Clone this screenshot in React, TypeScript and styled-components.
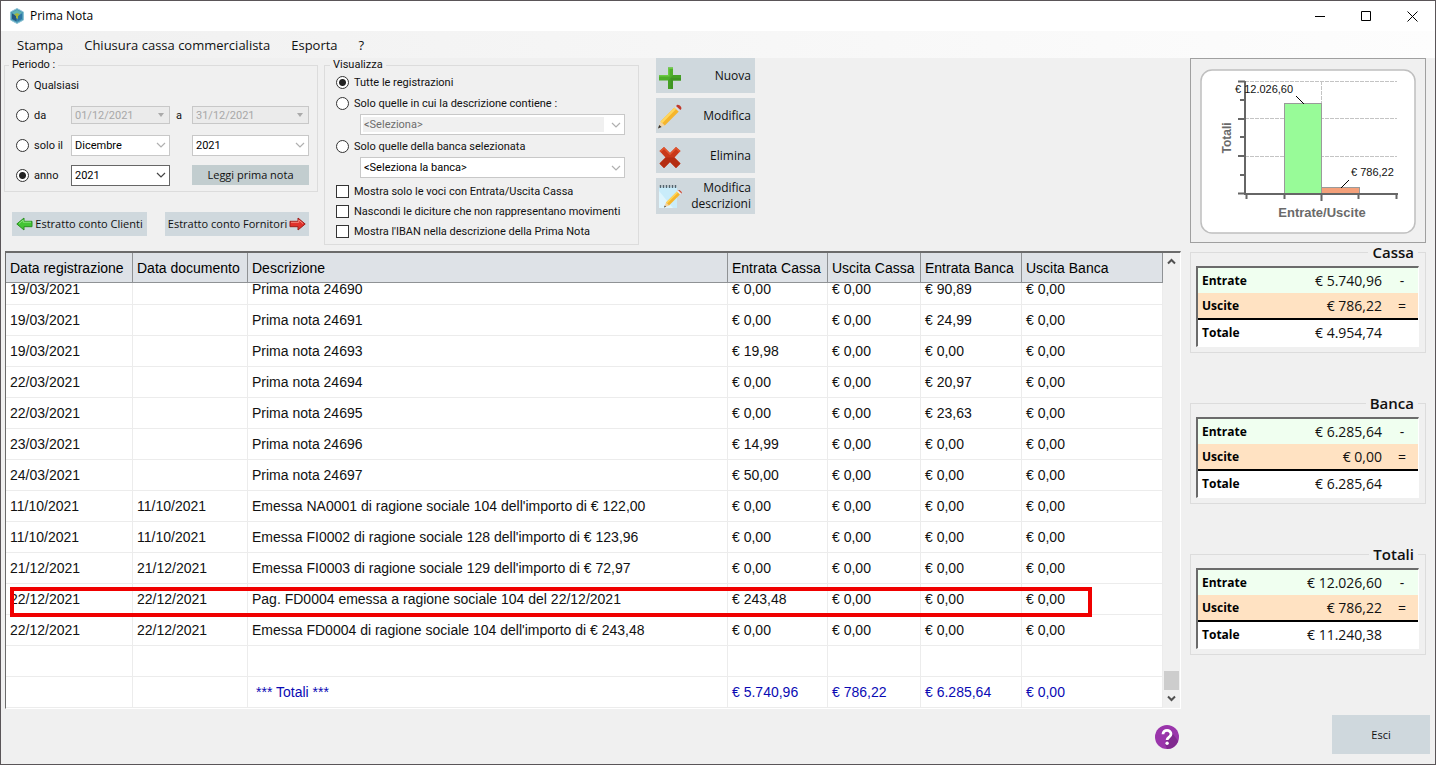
import React, { useLayoutEffect, useRef } from "react";
import styled, { createGlobalStyle, css } from "styled-components";

const GlobalStyle = createGlobalStyle`
  *, *::before, *::after { box-sizing: border-box; }
  html, body { margin: 0; padding: 0; }
  body, button, input, select, legend, table {
    font-family: "Open Sans", "Noto Sans", sans-serif;
    font-size: 11px;
    color: #111;
  }
`;

const labelFont = css`
  font-family: Roboto, Tahoma, sans-serif;
  font-size: 11px;
`;

/* ---------- window frame ---------- */

const Window = styled.div`
  display: flex;
  flex-direction: column;
  height: 100vh;
  background: #f0f0f0;
  border: 1px solid #5a5558;
`;

const TitleBar = styled.header`
  display: flex;
  align-items: center;
  flex: none;
  height: 30px;
  padding-left: 8px;
  background: #fff;
`;

const Title = styled.h1`
  flex: 1;
  margin: 0 0 0 5px;
  font-size: 12px;
  font-weight: 400;
  line-height: 16px;
  color: #000;
`;

const CaptionButton = styled.button`
  display: flex;
  align-items: center;
  justify-content: center;
  width: 46px;
  height: 30px;
  padding: 0;
  border: 0;
  background: none;
`;

const MenuBar = styled.nav`
  display: flex;
  align-items: center;
  flex: none;
  gap: 21px;
  height: 27px;
  padding-left: 16px;
  background: linear-gradient(90deg, #f0f0f0, #fdfdfd);
`;

const MenuItem = styled.button`
  padding: 0;
  border: 0;
  background: none;
  font-size: 13px;
  line-height: 20px;
  color: #111;
`;

const Body = styled.main`
  display: flex;
  flex: 1;
  min-height: 0;
  gap: 9px;
  padding: 0 9px 0 4px;
`;

const MainColumn = styled.div`
  display: flex;
  flex-direction: column;
  flex: 1;
  min-width: 0;
  gap: 6px;
`;

const SideColumn = styled.aside`
  flex: none;
  width: 236px;
`;

const Footer = styled.footer`
  display: flex;
  align-items: center;
  justify-content: flex-end;
  flex: none;
  gap: 153px;
  height: 55px;
  padding: 0 5px 4px 0;
`;

/* ---------- filters ---------- */

const Filters = styled.div`
  display: flex;
  align-items: flex-start;
`;

const Group = styled.fieldset`
  display: flex;
  flex-direction: column;
  margin: 0;
  min-width: 0;
  border: 1px solid #dcdcdc;
`;

const GroupLegend = styled.legend`
  padding: 0 3px;
  ${labelFont}
  line-height: 14px;
`;

const PeriodColumn = styled.div`
  display: flex;
  flex-direction: column;
  gap: 20px;
  width: 314px;
  margin: 0 6px 0 -1px;
`;

const PeriodGroup = styled(Group)`
  gap: 8px;
  padding: 2px 8px 5px 11px;

  & > legend {
    margin-left: -7px;
  }
`;

const PeriodRow = styled.div`
  display: grid;
  grid-template-columns: 55px 99px 22px 1fr;
  align-items: center;
  height: 22px;
`;

const ViewGroup = styled(Group)`
  gap: 1px;
  width: 315px;
  padding: 0 13px 3px 11px;

  & > legend {
    margin-left: -6px;
  }
`;

const Option = styled.label`
  display: flex;
  align-items: center;
  gap: 5px;
  height: 20px;
  ${labelFont}
  white-space: nowrap;
`;

const CheckList = styled.div`
  display: flex;
  flex-direction: column;
  padding-top: 2px;
`;

const Radio = styled.input.attrs({ type: "radio" })`
  appearance: none;
  flex: none;
  width: 13px;
  height: 13px;
  margin: 0;
  border: 1px solid #333;
  border-radius: 50%;
  background: #fff;

  &:checked {
    background: radial-gradient(circle, #222 0 3px, #fff 4px);
  }
`;

const Check = styled.input.attrs({ type: "checkbox" })`
  appearance: none;
  flex: none;
  width: 13px;
  height: 13px;
  margin: 0;
  border: 1px solid #333;
  background: #fff;
`;

const Between = styled.span`
  ${labelFont}
  text-align: center;
  padding-right: 4px;
`;

type Tone = "date" | "faded" | "active" | "blocked";

const tones = {
  date: css`
    height: 18px;
    border-color: #c8c8c8;
    background: #ebebeb;
    color: #a8a8a8;
  `,
  faded: css`
    border-color: #c8c8c8;
  `,
  active: css`
    border-color: #666;
  `,
  blocked: css`
    border-color: #c8c8c8;
    background: #f0f0f0;
    box-shadow: inset 0 0 0 2px #fff, inset -20px 0 0 #fff;
    color: #6d6d6d;
  `,
};

const SelectFrame = styled.span<{ $inset?: boolean }>`
  display: grid;
  align-items: center;
  margin-left: ${(p) => (p.$inset ? "24px" : "0")};

  & > * {
    grid-area: 1 / 1;
  }

  & > svg {
    justify-self: end;
    margin-right: 4px;
    pointer-events: none;
  }
`;

const SelectBox = styled.select<{ $tone: Tone }>`
  appearance: none;
  width: 100%;
  height: 21px;
  margin: 0;
  padding: 0 18px 0 3px;
  border: 1px solid;
  border-radius: 0;
  background: #fff;
  ${labelFont}
  color: #000;
  opacity: 1;
  ${(p) => tones[p.$tone]}
`;

const FlatButton = styled.button<{ $dark?: boolean }>`
  display: flex;
  align-items: center;
  justify-content: center;
  padding: 0;
  border: 0;
  background: ${(p) => (p.$dark ? "#c2cdcf" : "#cfd8dd")};
  line-height: 16px;
  white-space: nowrap;

  & > svg {
    flex: none;
  }
`;

const ReadButton = styled(FlatButton)`
  height: 20px;
`;

const StatementRow = styled.div`
  display: flex;
  justify-content: space-between;
  padding: 0 9px 0 8px;
`;

const StatementButton = styled(FlatButton)<{ $width: number }>`
  gap: 2px;
  width: ${(p) => p.$width}px;
  height: 24px;
`;

const ActionList = styled.div`
  display: flex;
  flex-direction: column;
  gap: 5px;
  width: 99px;
  margin-left: 17px;
`;

const ActionButton = styled(FlatButton)`
  justify-content: space-between;
  height: 36px;
  padding: 0 4px 0 1px;
  font-size: 12px;
  text-align: right;
  white-space: normal;

  &:not(:last-child) {
    height: 35px;
  }
`;

const ExitButton = styled(FlatButton)`
  width: 98px;
  height: 39px;
`;

const HelpButton = styled.button`
  display: flex;
  margin-top: 4px;
  padding: 0;
  border: 0;
  background: none;
`;

/* ---------- register ---------- */

const Register = styled.section`
  display: flex;
  flex: 1;
  min-height: 0;
  border-style: solid;
  border-width: 2px 1px 1px 1px;
  border-color: #6b6b6b #fff #fff #6b6b6b;
  background: #fff;
`;

const Scroller = styled.div`
  flex: 1;
  min-width: 0;
  overflow-y: auto;
  scrollbar-width: none;
`;

const RegisterTable = styled.table`
  width: 100%;
  table-layout: fixed;
  border-collapse: separate;
  border-spacing: 0;

  th,
  td {
    overflow: hidden;
    padding: 0 0 0 4px;
    font-family: "Liberation Sans", Arial, sans-serif;
    font-size: 14px;
    font-weight: 400;
    text-align: left;
    white-space: nowrap;
  }

  th {
    position: sticky;
    top: 0;
    z-index: 2;
    height: 30px;
    border-right: 1px solid #8f9295;
    border-bottom: 1px solid #8f9295;
    background: #dee2e7;
    color: #000;
  }

  td {
    height: 31px;
    border-right: 1px solid #ececec;
    border-bottom: 1px solid #ececec;
  }
`;

const Col = styled.col<{ $width?: number }>`
  width: ${(p) => (p.$width ? `${p.$width}px` : "auto")};
`;

const EntryRow = styled.tr<{ $total?: boolean }>`
  position: relative;
  color: ${(p) => (p.$total ? "#0a0ab4" : "#111")};

  ${(p) =>
    p.$total &&
    css`
      & > td:nth-child(3) {
        padding-left: 8px;
      }
    `}
`;

const Marker = styled.span`
  position: absolute;
  z-index: 1;
  inset: 3px 71px -2px 4px;
  border: 4px solid #f00000;
  pointer-events: none;
`;

const ScrollTrack = styled.div`
  display: flex;
  flex-direction: column;
  align-items: center;
  justify-content: space-between;
  flex: none;
  width: 17px;
  padding: 5px 0 6px;
  background: #f0f0f0;
`;

const ScrollEnd = styled.div`
  display: flex;
  flex-direction: column;
  align-items: center;
  gap: 5px;
`;

const Thumb = styled.div`
  width: 15px;
  height: 19px;
  background: #cdcdcd;
`;

/* ---------- side panels ---------- */

const ChartPanel = styled.div`
  height: 185px;
  padding: 10px 9px;
  border: 1px solid #a0a0a0;

  & > svg {
    display: block;
    font-family: "Liberation Sans", Arial, sans-serif;
  }
`;

const Summaries = styled.div`
  display: flex;
  flex-direction: column;
  gap: 41px;
`;

const SummaryGroup = styled(Group)`
  padding: 5px 6px 5px 5px;
`;

const SummaryLegend = styled.legend`
  margin-left: auto;
  margin-right: 1px;
  padding: 0 4px;
  font-size: 15px;
  font-weight: 600;
  line-height: 18px;
`;

const SummaryTable = styled.table`
  width: 100%;
  height: 81px;
  border-style: solid;
  border-width: 2px 1px 1px 2px;
  border-color: #6b6b6b #fff #fff #6b6b6b;
  border-collapse: separate;
  border-spacing: 0;
  background: #fff;

  th,
  td {
    height: 25px;
    padding: 0;
    font-size: 14px;
    font-weight: 400;
    line-height: 20px;
    text-align: right;
  }

  th {
    width: 60px;
    padding-left: 4px;
    font-size: 12px;
    font-weight: 700;
    text-align: left;
    color: #000;
  }

  td:last-child {
    width: 36px;
    padding-left: 4px;
    text-align: center;
  }

  tr:nth-child(1) {
    background: #f0fff0;
  }

  tr:nth-child(2) {
    background: #ffe2c2;
  }

  tr:nth-child(3) > * {
    height: 28px;
    border-top: 2px solid #000;
  }
`;

/* ---------- icons ---------- */

const AppIcon = () => (
  <svg width="16" height="16" viewBox="0 0 16 16" aria-hidden="true">
    <path d="M8 .5 14.5 4v8L8 15.500 1.500 12V4z" fill="#4e9cb8" stroke="#8fc3d4" />
    <path d="M8 2 13 4.800 8 7.500 3 4.800z" fill="#63b5b0" />
    <path d="M3 5.500 7.600 8v5.600L3 11z" fill="#23577f" />
    <path d="M13 5.500 8.400 8v5.600L13 11z" fill="#2c76a5" />
    <path d="M5 6.500 8 5l3 1.500L9 8v3L7 10V8z" fill="#a6b63c" />
  </svg>
);

const Minimize = () => (
  <svg width="10" height="11" aria-hidden="true">
    <path d="M0 5.500h10" stroke="#000" />
  </svg>
);

const Maximize = () => (
  <svg width="11" height="11" aria-hidden="true">
    <path d="M.5 .5h9v9h-9z" fill="none" stroke="#000" />
  </svg>
);

const Close = () => (
  <svg width="11" height="11" aria-hidden="true">
    <path d="M.5 .5l10 10M10.500 .5l-10 10" stroke="#000" />
  </svg>
);

const Chevron = ({ color }: { color: string }) => (
  <svg width="10" height="8" aria-hidden="true">
    <path d="M1 2l4 4 4-4" fill="none" stroke={color} strokeWidth="1.200" />
  </svg>
);

const ScrollArrow = ({ up }: { up?: boolean }) => (
  <svg width="9" height="7" aria-hidden="true">
    <path d={up ? "M1 5.500l3.500-3.500L8 5.500" : "M1 1.500l3.500 3.500L8 1.500"} fill="none" stroke="#505050" strokeWidth="2" />
  </svg>
);

const Triangle = () => (
  <svg width="10" height="8" aria-hidden="true">
    <path d="M2 2h6L5 6z" fill="#aaa" />
  </svg>
);

const LeftArrow = () => (
  <svg width="17" height="14" viewBox="0 0 17 14" aria-hidden="true">
    <path d="M.8 7 8 1v3.300h8v5.400H8V13z" fill="#43c433" stroke="#2a8f20" strokeLinejoin="round" />
    <path d="M3 6.600 7.200 3v2.200H15" fill="none" stroke="#8be57d" />
  </svg>
);

const RightArrow = () => (
  <svg width="17" height="14" viewBox="0 0 17 14" aria-hidden="true">
    <path d="M16.200 7 9 1v3.300H1v5.400h8V13z" fill="#e0322c" stroke="#9c1f1b" strokeLinejoin="round" />
    <path d="M2 5.300h7.800V3L14 6.600" fill="none" stroke="#f48a80" />
  </svg>
);

const PlusIcon = () => (
  <svg width="26" height="26" viewBox="0 0 26 26" aria-hidden="true">
    <path d="M11 4.500h5V12h8v5.500h-8V26h-5v-8.500H2V12h9z" fill="#4fae2b" />
    <path d="M11 17.500 13.500 15l2.500 2.500V26h-5zM16 12h8v2.700H13.500z" fill="#46a026" />
    <path d="M13.500 14.700H24v2.800h-8V26h-2.500z" fill="#3f9422" />
    <path d="M11 4.500h5V6h-3.500v7.500H2V12h9z" fill="#6cc944" />
  </svg>
);

const PencilIcon = () => (
  <svg width="26" height="26" viewBox="0 0 26 26" aria-hidden="true">
    <path d="M1 25.500 3.500 18.500 7.800 22.500z" fill="#f3d3a2" />
    <path d="M1 25.500l1.200-3.600 2.400 2.200z" fill="#333" />
    <path d="M3.500 18.500 17.500 4.500 21.800 8.500 7.800 22.500z" fill="#f5b52c" />
    <path d="M3.500 18.500 17.500 4.500l1.700 1.600L5.200 20.200z" fill="#ffd65c" />
    <path d="M17.500 4.500 19 3l4.300 4-1.500 1.500z" fill="#d9dde0" />
    <path d="M19 3l.8-.8c1.800-1.700 6 2.300 4.300 4l-.8.800z" fill="#c1392b" />
  </svg>
);

const CrossIcon = () => (
  <svg width="26" height="26" viewBox="0 0 26 26" aria-hidden="true">
    <path d="M2.500 8 7 4l6 6 6-6 4.500 4-6 6.500 6 6L19 25l-6-6-6 6-4.500-4.500 6-6z" fill="#c9391a" />
    <path d="M8.500 14.500h9l6 6L19 25l-6-6-6 6-4.500-4.500z" fill="#b42d12" />
    <path d="M7 4 2.500 8l1.200 1.200L7 6.200l6 6 6-6 3.300 3L23.500 8 19 4l-6 6z" fill="#e0552f" />
  </svg>
);

const NotepadIcon = () => (
  <svg width="26" height="26" viewBox="0 0 26 26" aria-hidden="true">
    <path d="M2 4h18v21H2z" fill="#c9ecfa" />
    <path d="M2 25V8l14 17z" fill="#dff5fd" />
    <path d="M3.500 2v3M6.500 2v3M9.500 2v3M12.500 2v3M15.500 2v3M18.500 2v3" stroke="#54646e" strokeWidth="1.400" />
    <path d="M7 24.500 9 19.500 12 22.500z" fill="#f3d3a2" />
    <path d="M7 24.500l.8-2 1.200 1.200z" fill="#333" />
    <path d="M9 19.500 20 8.500l3 3-11 11z" fill="#f5b52c" />
    <path d="M9 19.500 20 8.500l1.100 1.100-11 11z" fill="#ffd65c" />
    <path d="M20 8.500l1.200-1.200 3 3L23 11.500z" fill="#e9ecee" />
    <path d="M21.200 7.300c1-1.600 4.800 2 3.300 3.300z" fill="#d2452f" />
  </svg>
);

const HelpIcon = () => (
  <svg width="24" height="24" viewBox="0 0 24 24" aria-hidden="true">
    <circle cx="12" cy="12" r="12" fill="#9a35ab" />
    <path d="M15 5 23.200 16A12 12 0 0 1 12 24l-2-5z" fill="#80298f" />
    <path d="M8 9.300C8 4.200 16 4.200 16 9c0 3.200-3.900 3-3.900 6" fill="none" stroke="#fff" strokeWidth="2.800" />
    <circle cx="12.100" cy="18.300" r="1.700" fill="#fff" />
  </svg>
);

/* ---------- data ---------- */

const columns: { label: string; width?: number }[] = [
  { label: "Data registrazione", width: 127 },
  { label: "Data documento", width: 115 },
  { label: "Descrizione" },
  { label: "Entrata Cassa", width: 100 },
  { label: "Uscita Cassa", width: 93 },
  { label: "Entrata Banca", width: 101 },
  { label: "Uscita Banca", width: 141 },
];

const zero = "€ 0,00";

const entries: string[][] = [
  ["19/03/2021", "", "Prima nota 24690", zero, zero, "€ 90,89", zero],
  ["19/03/2021", "", "Prima nota 24691", zero, zero, "€ 24,99", zero],
  ["19/03/2021", "", "Prima nota 24693", "€ 19,98", zero, zero, zero],
  ["22/03/2021", "", "Prima nota 24694", zero, zero, "€ 20,97", zero],
  ["22/03/2021", "", "Prima nota 24695", zero, zero, "€ 23,63", zero],
  ["23/03/2021", "", "Prima nota 24696", "€ 14,99", zero, zero, zero],
  ["24/03/2021", "", "Prima nota 24697", "€ 50,00", zero, zero, zero],
  ["11/10/2021", "11/10/2021", "Emessa NA0001 di ragione sociale 104 dell'importo di € 122,00", zero, zero, zero, zero],
  ["11/10/2021", "11/10/2021", "Emessa FI0002 di ragione sociale 128 dell'importo di € 123,96", zero, zero, zero, zero],
  ["21/12/2021", "21/12/2021", "Emessa FI0003 di ragione sociale 129 dell'importo di € 72,97", zero, zero, zero, zero],
  ["22/12/2021", "22/12/2021", "Pag. FD0004 emessa a ragione sociale 104 del 22/12/2021", "€ 243,48", zero, zero, zero],
  ["22/12/2021", "22/12/2021", "Emessa FD0004 di ragione sociale 104 dell'importo di € 243,48", zero, zero, zero, zero],
  ["", "", "", "", "", "", ""],
  ["", "", "*** Totali ***", "€ 5.740,96", "€ 786,22", "€ 6.285,64", zero],
];

const markedEntry = 10;

const summaries = [
  { title: "Cassa", income: "€ 5.740,96", expense: "€ 786,22", total: "€ 4.954,74" },
  { title: "Banca", income: "€ 6.285,64", expense: "€ 0,00", total: "€ 6.285,64" },
  { title: "Totali", income: "€ 12.026,60", expense: "€ 786,22", total: "€ 11.240,38" },
];

/* ---------- parts ---------- */

type DropDownProps = {
  label: string;
  value: string;
  tone: Tone;
  inset?: boolean;
};

const DropDown = ({ label, value, tone, inset }: DropDownProps) => (
  <SelectFrame $inset={inset}>
    <SelectBox $tone={tone} aria-label={label} disabled={tone === "date" || tone === "blocked"}>
      <option>{value}</option>
    </SelectBox>
    {tone === "date" ? <Triangle /> : <Chevron color={tone === "active" ? "#444" : "#b0b0b0"} />}
  </SelectFrame>
);

const PeriodFilter = () => (
  <PeriodColumn>
    <PeriodGroup>
      <GroupLegend>Periodo :</GroupLegend>
      <PeriodRow>
        <Option>
          <Radio name="period" />
          Qualsiasi
        </Option>
      </PeriodRow>
      <PeriodRow>
        <Option>
          <Radio name="period" />
          da
        </Option>
        <DropDown label="Data iniziale" value="01/12/2021" tone="date" />
        <Between>a</Between>
        <DropDown label="Data finale" value="31/12/2021" tone="date" />
      </PeriodRow>
      <PeriodRow>
        <Option>
          <Radio name="period" />
          solo il
        </Option>
        <DropDown label="Mese" value="Dicembre" tone="faded" />
        <span />
        <DropDown label="Anno del mese" value="2021" tone="faded" />
      </PeriodRow>
      <PeriodRow>
        <Option>
          <Radio name="period" defaultChecked />
          anno
        </Option>
        <DropDown label="Anno" value="2021" tone="active" />
        <span />
        <ReadButton $dark>Leggi prima nota</ReadButton>
      </PeriodRow>
    </PeriodGroup>
    <StatementRow>
      <StatementButton $width={135}>
        <LeftArrow />
        Estratto conto Clienti
      </StatementButton>
      <StatementButton $width={144}>
        Estratto conto Fornitori
        <RightArrow />
      </StatementButton>
    </StatementRow>
  </PeriodColumn>
);

const ViewFilter = () => (
  <ViewGroup>
    <GroupLegend>Visualizza</GroupLegend>
    <Option>
      <Radio name="view" defaultChecked />
      Tutte le registrazioni
    </Option>
    <Option>
      <Radio name="view" />
      Solo quelle in cui la descrizione contiene :
    </Option>
    <DropDown label="Descrizione" value="<Seleziona>" tone="blocked" inset />
    <Option>
      <Radio name="view" />
      Solo quelle della banca selezionata
    </Option>
    <DropDown label="Banca" value="<Seleziona la banca>" tone="faded" inset />
    <CheckList>
      <Option>
        <Check />
        Mostra solo le voci con Entrata/Uscita Cassa
      </Option>
      <Option>
        <Check />
        Nascondi le diciture che non rappresentano movimenti
      </Option>
      <Option>
        <Check />
        Mostra l'IBAN nella descrizione della Prima Nota
      </Option>
    </CheckList>
  </ViewGroup>
);

const EntryList = () => {
  const scroller = useRef<HTMLDivElement>(null);

  useLayoutEffect(() => {
    const node = scroller.current;
    if (node) node.scrollTop = node.scrollHeight;
  }, []);

  return (
    <Register>
      <Scroller ref={scroller}>
        <RegisterTable>
          <colgroup>
            {columns.map((c) => (
              <Col key={c.label} $width={c.width} />
            ))}
          </colgroup>
          <thead>
            <tr>
              {columns.map((c) => (
                <th key={c.label} scope="col">
                  {c.label}
                </th>
              ))}
            </tr>
          </thead>
          <tbody>
            {entries.map((cells, row) => (
              <EntryRow key={row} $total={row === entries.length - 1}>
                {cells.map((text, i) => (
                  <td key={i}>
                    {text}
                    {row === markedEntry && i === 0 && <Marker />}
                  </td>
                ))}
              </EntryRow>
            ))}
          </tbody>
        </RegisterTable>
      </Scroller>
      <ScrollTrack>
        <ScrollArrow up />
        <ScrollEnd>
          <Thumb />
          <ScrollArrow />
        </ScrollEnd>
      </ScrollTrack>
    </Register>
  );
};

const TotalsChart = () => (
  <ChartPanel>
    <svg width="216" height="165" viewBox="0 0 216 165" role="img" aria-label="Entrate/Uscite">
      <rect x="1" y="1" width="214" height="163" rx="11" fill="#fff" stroke="#bfbfbf" strokeWidth="1.500" />
      <g stroke="#c4c4c4" strokeDasharray="4 1">
        <path d="M45 12.500h152M45 49.500h152M45 87.500h152M121.500 12v112" />
      </g>
      <rect x="84.500" y="34.500" width="37" height="90" fill="#98fb98" stroke="#9a9a9a" />
      <rect x="121.500" y="118.500" width="38" height="6" fill="#f4a07a" stroke="#9a9a9a" />
      <path
        d="M45 12v114M38 12.500h7M40 31h5M38 50h7M40 68h5M38 87h7M40 106h5M38 124.500h7M44 125h154M46.500 125v5M84.500 125v5M121.500 125v7M158.500 125v5M196.500 125v5"
        fill="none"
        stroke="#666"
        strokeWidth="2"
      />
      <path d="M96 27l8 8M141 119l8-8" stroke="#000" />
      <text x="35" y="24" fontSize="11" fill="#111">€ 12.026,60</text>
      <text x="151" y="107" fontSize="11" fill="#111">€ 786,22</text>
      <text x="122" y="148" fontSize="13" fontWeight="700" fill="#6a6a6a" textAnchor="middle">
        Entrate/Uscite
      </text>
      <text transform="translate(31 69) rotate(-90)" fontSize="12" fontWeight="700" fill="#6a6a6a" textAnchor="middle">
        Totali
      </text>
    </svg>
  </ChartPanel>
);

export default function App() {
  return (
    <>
      <GlobalStyle />
      <Window>
        <TitleBar>
          <AppIcon />
          <Title>Prima Nota</Title>
          <CaptionButton aria-label="Riduci a icona">
            <Minimize />
          </CaptionButton>
          <CaptionButton aria-label="Ingrandisci">
            <Maximize />
          </CaptionButton>
          <CaptionButton aria-label="Chiudi">
            <Close />
          </CaptionButton>
        </TitleBar>
        <MenuBar>
          <MenuItem>Stampa</MenuItem>
          <MenuItem>Chiusura cassa commercialista</MenuItem>
          <MenuItem>Esporta</MenuItem>
          <MenuItem>?</MenuItem>
        </MenuBar>
        <Body>
          <MainColumn>
            <Filters>
              <PeriodFilter />
              <ViewFilter />
              <ActionList>
                <ActionButton>
                  <PlusIcon />
                  Nuova
                </ActionButton>
                <ActionButton>
                  <PencilIcon />
                  Modifica
                </ActionButton>
                <ActionButton>
                  <CrossIcon />
                  Elimina
                </ActionButton>
                <ActionButton>
                  <NotepadIcon />
                  Modifica descrizioni
                </ActionButton>
              </ActionList>
            </Filters>
            <EntryList />
          </MainColumn>
          <SideColumn>
            <TotalsChart />
            <Summaries>
              {summaries.map((s) => (
                <SummaryGroup key={s.title}>
                  <SummaryLegend>{s.title}</SummaryLegend>
                  <SummaryTable>
                    <tbody>
                      <tr>
                        <th scope="row">Entrate</th>
                        <td>{s.income}</td>
                        <td>-</td>
                      </tr>
                      <tr>
                        <th scope="row">Uscite</th>
                        <td>{s.expense}</td>
                        <td>=</td>
                      </tr>
                      <tr>
                        <th scope="row">Totale</th>
                        <td>{s.total}</td>
                        <td />
                      </tr>
                    </tbody>
                  </SummaryTable>
                </SummaryGroup>
              ))}
            </Summaries>
          </SideColumn>
        </Body>
        <Footer>
          <HelpButton aria-label="Aiuto">
            <HelpIcon />
          </HelpButton>
          <ExitButton>Esci</ExitButton>
        </Footer>
      </Window>
    </>
  );
}
